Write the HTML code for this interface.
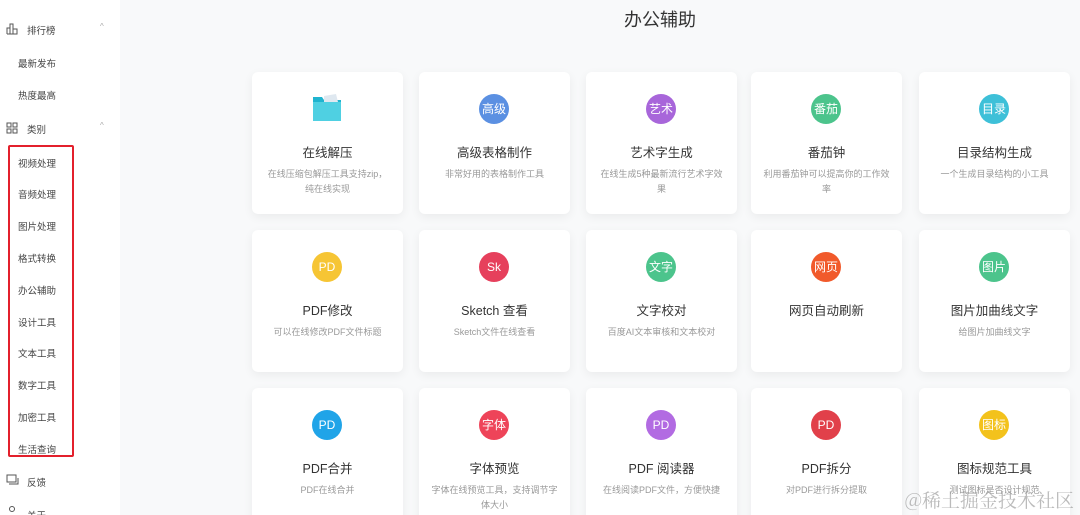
<!DOCTYPE html><html><head><meta charset="utf-8"><style>
*{margin:0;padding:0;box-sizing:border-box}
html,body{width:1080px;height:515px;overflow:hidden}
body{background:#f8f9fa;font-family:"Liberation Sans","Noto Sans CJK SC",sans-serif;position:relative}
.side{position:absolute;left:0;top:0;width:120px;height:515px;background:#fff}
.it{position:absolute;left:18px;font-size:9.5px;color:#444}
.hd{position:absolute;left:27px;font-size:9.5px;color:#444}
.ic{position:absolute;left:6px}
.car{position:absolute;left:100px;font-size:8px;color:#aaa}
.box{position:absolute;left:8px;top:145px;width:66px;height:312px;border:2px solid #e3202c;border-radius:2px}
h1{position:absolute;left:560px;width:200px;text-align:center;top:6px;font-size:18px;font-weight:normal;color:#333}
.c{position:absolute;width:151px;height:142px;background:#fff;border-radius:6px;box-shadow:0 3px 10px rgba(0,0,0,.06);text-align:center}
.o{position:absolute;left:60px;top:22px;width:30px;height:30px;border-radius:50%;color:#fff;font-size:12px;line-height:30px;text-align:center}
.t{position:absolute;top:70px;left:0;right:0;font-size:12.5px;color:#333}
.d{position:absolute;top:95px;left:12px;right:12px;font-size:9px;color:#999;line-height:15px}
.wm{position:absolute;right:6px;top:488px;font-family:"Noto Serif CJK SC",serif;font-size:19px;color:rgba(150,150,150,.65);line-height:24px}
</style></head><body>
<div class="side">
<svg class="ic" style="top:23px" width="13" height="12" viewBox="0 0 13 12" fill="none" stroke="#555"><path d="M1 11V5h3v6M4 11V1h3v10M7 11V6h4v5H1"/></svg>
<div class="hd" style="top:23px">排行榜</div><div class="car" style="top:22px">^</div>
<div class="it" style="top:56px">最新发布</div>
<div class="it" style="top:88px">热度最高</div>
<svg class="ic" style="top:122px" width="12" height="12" viewBox="0 0 12 12" fill="none" stroke="#555"><rect x="1" y="1" width="4" height="4"/><rect x="7" y="1" width="4" height="4"/><rect x="1" y="7" width="4" height="4"/><rect x="7" y="7" width="4" height="4"/></svg>
<div class="hd" style="top:122px">类别</div><div class="car" style="top:121px">^</div>
<div class="box"></div>
<div class="it" style="top:156px">视频处理</div>
<div class="it" style="top:187px">音频处理</div>
<div class="it" style="top:219px">图片处理</div>
<div class="it" style="top:251px">格式转换</div>
<div class="it" style="top:283px">办公辅助</div>
<div class="it" style="top:315px">设计工具</div>
<div class="it" style="top:346px">文本工具</div>
<div class="it" style="top:378px">数字工具</div>
<div class="it" style="top:410px">加密工具</div>
<div class="it" style="top:442px">生活查询</div>
<svg class="ic" style="top:474px" width="13" height="12" viewBox="0 0 13 12" fill="none" stroke="#555"><rect x="1" y="1" width="9" height="7"/><path d="M3 10h9V4"/></svg>
<div class="hd" style="top:475px">反馈</div>
<svg class="ic" style="top:506px" width="12" height="10" viewBox="0 0 12 10" fill="none" stroke="#555"><circle cx="6" cy="3" r="2.5"/></svg>
<div class="hd" style="top:508px">关于</div>
</div>
<h1>办公辅助</h1>

<div class="c" style="left:252px;top:72px"><svg style="position:absolute;left:60px;top:22px" width="30" height="28" viewBox="0 0 30 28"><path d="M1 3h9l2 3h17v21H1z" fill="#1fb4cf"/><path d="M12 2l12-2 2 8H12z" fill="#dfe8f0"/><path d="M1 8h28v19H1z" fill="#4fd0e2"/></svg><div class="t">在线解压</div><div class="d">在线压缩包解压工具支持zip，纯在线实现</div></div>
<div class="c" style="left:419px;top:72px"><div class="o" style="background:#5b90e2">高级</div><div class="t">高级表格制作</div><div class="d">非常好用的表格制作工具</div></div>
<div class="c" style="left:586px;top:72px"><div class="o" style="background:#a866da">艺术</div><div class="t">艺术字生成</div><div class="d">在线生成5种最新流行艺术字效果</div></div>
<div class="c" style="left:751px;top:72px"><div class="o" style="background:#4cc48c">番茄</div><div class="t">番茄钟</div><div class="d">利用番茄钟可以提高你的工作效率</div></div>
<div class="c" style="left:919px;top:72px"><div class="o" style="background:#3ec0d8">目录</div><div class="t">目录结构生成</div><div class="d">一个生成目录结构的小工具</div></div>

<div class="c" style="left:252px;top:230px"><div class="o" style="background:#f6c534">PD</div><div class="t">PDF修改</div><div class="d">可以在线修改PDF文件标题</div></div>
<div class="c" style="left:419px;top:230px"><div class="o" style="background:#e6405c">Sk</div><div class="t">Sketch 查看</div><div class="d">Sketch文件在线查看</div></div>
<div class="c" style="left:586px;top:230px"><div class="o" style="background:#4cc48c">文字</div><div class="t">文字校对</div><div class="d">百度AI文本审核和文本校对</div></div>
<div class="c" style="left:751px;top:230px"><div class="o" style="background:#f15a2b">网页</div><div class="t">网页自动刷新</div><div class="d"></div></div>
<div class="c" style="left:919px;top:230px"><div class="o" style="background:#4cc48c">图片</div><div class="t">图片加曲线文字</div><div class="d">给图片加曲线文字</div></div>

<div class="c" style="left:252px;top:388px"><div class="o" style="background:#20a4e8">PD</div><div class="t">PDF合并</div><div class="d">PDF在线合并</div></div>
<div class="c" style="left:419px;top:388px"><div class="o" style="background:#ee4459">字体</div><div class="t">字体预览</div><div class="d">字体在线预览工具，支持调节字体大小</div></div>
<div class="c" style="left:586px;top:388px"><div class="o" style="background:#b26be2">PD</div><div class="t">PDF 阅读器</div><div class="d">在线阅读PDF文件，方便快捷</div></div>
<div class="c" style="left:751px;top:388px"><div class="o" style="background:#e1404a">PD</div><div class="t">PDF拆分</div><div class="d">对PDF进行拆分提取</div></div>
<div class="c" style="left:919px;top:388px"><div class="o" style="background:#f3c21c">图标</div><div class="t">图标规范工具</div><div class="d">测试图标是否设计规范</div></div>
<div class="wm">@稀土掘金技术社区</div>
</body></html>
